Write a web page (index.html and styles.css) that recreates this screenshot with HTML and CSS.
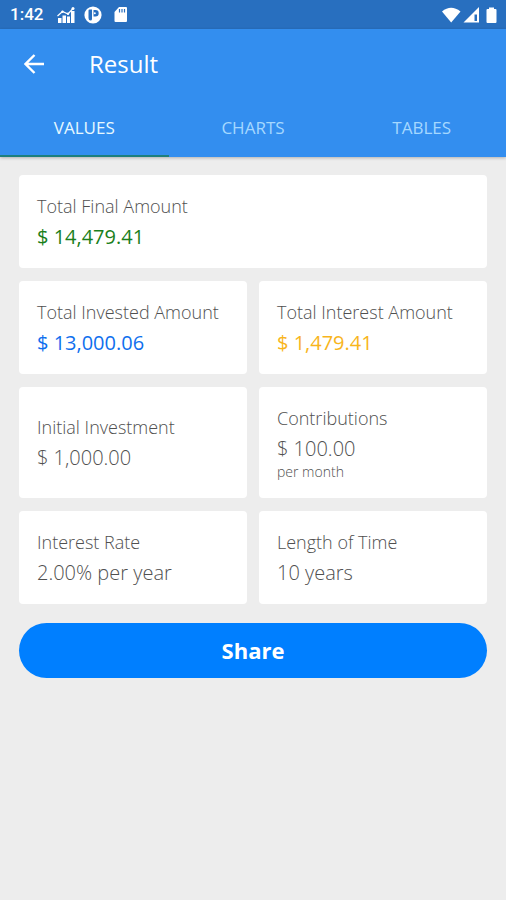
FILE: index.html
```html
<!DOCTYPE html>
<html lang="en">
<head>
<meta charset="utf-8">
<meta name="viewport" content="width=device-width, initial-scale=1">
<title>Result</title>
<link rel="stylesheet" href="styles.css">
</head>
<body>
<div class="status">
  <span class="clock">1:42</span>
  <svg class="status-icon" width="18" height="18" viewBox="0 0 18 18" aria-hidden="true">
    <path d="M1 12h3.500v5H1zM5.500 9.500h3.500v7.500H5.500zM10 10.500h3v6.500h-3zM14 5h3.500v12H14z" fill="#fff"/>
    <path d="M.5 10l5-4.500 5.500 2.500L16 2.500" fill="none" stroke="#fff" stroke-width="1.200"/>
    <circle cx="5.500" cy="5.700" r="1.200" fill="#fff"/><circle cx="11" cy="7.800" r="1.200" fill="#fff"/><circle cx="16" cy="2.500" r="1.500" fill="#fff"/>
  </svg>
  <svg class="status-icon" width="18" height="18" viewBox="0 0 18 18" aria-hidden="true">
    <circle cx="9" cy="9" r="8.600" fill="#fff"/>
    <path d="M4.500 4.500q0-1 1-1h2.500v9.500q0 1.500-1.500 1.500-2 0-2-2.500zM9.500 4h2a3.200 3.200 0 0 1 0 6.400h-2z" fill="#286fbf"/>
    <circle cx="10.800" cy="7.200" r="1" fill="#fff"/>
  </svg>
  <svg class="status-icon sd" width="14" height="16" viewBox="0 0 14 16" aria-hidden="true">
    <path d="M5 0h7Q13 0 13 1v13q0 1-1 1H1.500Q.5 15 .5 14V5z" fill="#fff"/>
    <path d="M5.500 2v3.500M8 2v3.500M10.500 2v3.500" stroke="#286fbf" stroke-width="1.200"/>
  </svg>
  <svg class="signals" width="56" height="18" viewBox="0 0 56 18" aria-hidden="true">
    <path d="M0 5.500Q9-2 18.500 5.500L9.200 16.500z" fill="#fff"/>
    <path d="M37 1v15.500H21.500z" fill="#fff"/>
    <path d="M32.500 8.500h2.500v6.500h-2.500z" fill="#286fbf"/>
    <path d="M47 1.500h5V3h1.500q1 0 1 1v12q0 1-1 1h-8q-1 0-1-1V4q0-1 1-1H47z" fill="#fff"/>
  </svg>
</div>
<header class="header">
  <div class="toolbar">
    <button class="back" type="button" aria-label="Back">
      <svg width="20" height="20" viewBox="0 0 20 20" aria-hidden="true"><path d="M10.500 1L1.500 10l9 9M1.500 10H20" fill="none" stroke="#fff" stroke-width="2.400"/></svg>
    </button>
    <h1 class="title">Result</h1>
  </div>
  <nav class="tabs">
    <a class="tab active" href="#values" aria-current="page">VALUES</a>
    <a class="tab" href="#charts">CHARTS</a>
    <a class="tab" href="#tables">TABLES</a>
  </nav>
</header>
<main class="content" id="values">
  <dl class="cards">
    <div class="card wide"><dt class="label">Total Final Amount</dt><dd class="value final">$ 14,479.41</dd></div>
    <div class="card"><dt class="label">Total Invested Amount</dt><dd class="value invested">$ 13,000.06</dd></div>
    <div class="card"><dt class="label">Total Interest Amount</dt><dd class="value interest">$ 1,479.41</dd></div>
    <div class="card"><dt class="label">Initial Investment</dt><dd class="value">$ 1,000.00</dd></div>
    <div class="card"><dt class="label">Contributions</dt><dd class="value">$ 100.00</dd><dd class="period">per month</dd></div>
    <div class="card"><dt class="label">Interest Rate</dt><dd class="value">2.00% per year</dd></div>
    <div class="card"><dt class="label">Length of Time</dt><dd class="value">10 years</dd></div>
  </dl>
  <button class="share" type="button">Share</button>
</main>
</body>
</html>
```
FILE: styles.css
```css
* { box-sizing: border-box; }

body {
  margin: 0;
  min-height: 100vh;
  background: #ededed;
  color: #505050;
  font-family: "Open Sans", "Noto Sans", sans-serif;
}

.status {
  display: flex;
  align-items: center;
  height: 29px;
  padding: 0 8px 0 10px;
  background: #286fbf;
}

.clock {
  margin-right: 14px;
  color: #fff;
  font: 500 17px/29px Roboto, sans-serif;
}

.status-icon { margin-right: 9px; }
.status-icon.sd { margin-left: 3px; }
.signals { margin-left: auto; }

.header {
  position: relative;
  background: #338eef;
  box-shadow: 0 1px 3px rgba(0, 0, 0, 0.25);
}

.toolbar {
  display: flex;
  align-items: center;
  height: 70px;
  padding-left: 16px;
}

.back {
  display: flex;
  align-items: center;
  justify-content: center;
  width: 36px;
  height: 36px;
  margin-right: 37px;
  padding: 0;
  border: 0;
  background: none;
}

.title {
  margin: 0;
  color: #fff;
  font-size: 24px;
  font-weight: 400;
  line-height: 34px;
}

.tabs {
  display: grid;
  grid-template-columns: repeat(3, 1fr);
}

.tab {
  height: 58px;
  border-bottom: 2px solid transparent;
  color: #a5d8ff;
  font-size: 17px;
  line-height: 58px;
  text-align: center;
  text-decoration: none;
}

.tab.active {
  border-color: #1d7f7c;
  color: #e6f8ff;
}

.content { padding: 18px 19px; }

.cards {
  display: grid;
  grid-template-columns: 1fr 1fr;
  gap: 13px 12px;
  margin: 0 0 19px;
}

.card {
  display: flex;
  flex-direction: column;
  justify-content: center;
  padding: 19px 18px 17px;
  border-radius: 4px;
  background: #fff;
}

.wide { grid-column: 1 / -1; }

.label {
  margin-bottom: 5px;
  font-size: 18px;
  font-weight: 300;
  line-height: 24px;
}

.value {
  margin: 0;
  font-size: 20px;
  font-weight: 300;
  line-height: 28px;
}

.final, .invested, .interest { font-weight: 500; }
.final { color: #1b7f1b; }
.invested { color: #0f6fee; }
.interest { color: #f8b51c; }

.period {
  margin: 0;
  font-size: 14px;
  font-weight: 300;
  line-height: 18px;
}

.share {
  display: block;
  width: 100%;
  height: 55px;
  padding: 0;
  border: 0;
  border-radius: 28px;
  background: #007fff;
  color: #fff;
  font: 700 22px/55px "Open Sans", "Noto Sans", sans-serif;
}
```
